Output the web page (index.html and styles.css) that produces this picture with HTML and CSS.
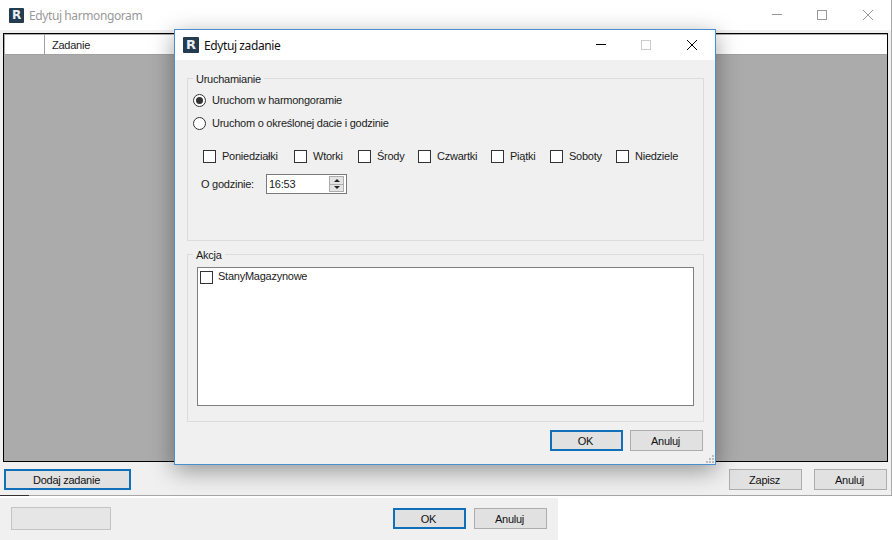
FILE: index.html
```html
<!DOCTYPE html>
<html lang="pl">
<head>
<meta charset="utf-8">
<title>Edytuj zadanie</title>
<link rel="stylesheet" href="styles.css">
</head>
<body>
<div class="desktop">
  <section class="win win-bottom">
    <div class="bottom-bar">
      <button class="btn btn-blank" type="button"></button>
      <button class="btn btn-default" type="button">OK</button>
      <button class="btn" type="button">Anuluj</button>
    </div>
  </section>

  <section class="win win-back">
    <header class="titlebar titlebar-back">
      <span class="logo logo-back">R</span>
      <span class="title title-muted">Edytuj harmongoram</span>
      <svg class="controls" width="102" height="12" viewBox="0 0 102 12" fill="none" stroke="#999">
        <path d="M0 5.5H10"/>
        <rect x="45.5" y="1.5" width="9" height="9"/>
        <path d="M91 1L101 11M101 1L91 11"/>
      </svg>
    </header>
    <div class="grid">
      <div class="grid-head">
        <div class="grid-corner"></div>
        <div class="grid-col">Zadanie</div>
      </div>
    </div>
    <footer class="back-foot">
      <button class="btn btn-default btn-add" type="button">Dodaj zadanie</button>
      <button class="btn btn-save" type="button">Zapisz</button>
      <button class="btn" type="button">Anuluj</button>
    </footer>
  </section>

  <section class="win win-dialog">
    <header class="titlebar titlebar-dialog">
      <span class="logo">R</span>
      <span class="title">Edytuj zadanie</span>
      <svg class="controls" width="102" height="12" viewBox="0 0 102 12" fill="none" stroke="#000">
        <path d="M0 5.5H10"/>
        <rect x="45.5" y="1.5" width="9" height="9" stroke="#ccc"/>
        <path d="M91 1L101 11M101 1L91 11"/>
      </svg>
    </header>
    <div class="dialog-body">
      <fieldset class="group group-run">
        <legend>Uruchamianie</legend>
        <label class="radio-row"><span class="radio radio-on"></span>Uruchom w harmongoramie</label>
        <label class="radio-row radio-row-2"><span class="radio"></span>Uruchom o określonej dacie i godzinie</label>
        <div class="days">
          <label class="day"><span class="check"></span>Poniedziałki</label>
          <label class="day"><span class="check"></span>Wtorki</label>
          <label class="day"><span class="check"></span>Środy</label>
          <label class="day"><span class="check"></span>Czwartki</label>
          <label class="day"><span class="check"></span>Piątki</label>
          <label class="day"><span class="check"></span>Soboty</label>
          <label class="day"><span class="check"></span>Niedziele</label>
        </div>
        <div class="time-row">
          <span class="time-label">O godzinie:</span>
          <div class="spin">
            <span class="spin-value">16:53</span>
            <span class="spin-btns">
              <span class="spin-btn"><i class="arrow-up"></i></span>
              <span class="spin-btn"><i class="arrow-down"></i></span>
            </span>
          </div>
        </div>
      </fieldset>
      <fieldset class="group group-action">
        <legend>Akcja</legend>
        <div class="list">
          <label class="list-item"><span class="check"></span><span class="list-text">StanyMagazynowe</span></label>
        </div>
      </fieldset>
      <div class="dialog-foot">
        <button class="btn btn-default" type="button">OK</button>
        <button class="btn" type="button">Anuluj</button>
      </div>
    </div>
    <svg class="grip" width="10" height="10" viewBox="0 0 10 10" fill="#bbb">
      <rect x="7" y="1" width="2" height="2"/>
      <rect x="4" y="4" width="2" height="2"/><rect x="7" y="4" width="2" height="2"/>
      <rect x="1" y="7" width="2" height="2"/><rect x="4" y="7" width="2" height="2"/><rect x="7" y="7" width="2" height="2"/>
    </svg>
  </section>
</div>
</body>
</html>
```
FILE: styles.css
```css
* { box-sizing: border-box; }
html, body { margin: 0; padding: 0; }
body {
  width: 892px;
  height: 540px;
  overflow: hidden;
  background: #fff;
  font-family: "Liberation Sans", Arial, sans-serif;
  font-size: 11px;
  letter-spacing: -0.25px;
  color: #1c1c1c;
}
.desktop { position: relative; width: 892px; height: 540px; overflow: hidden; }
.win { position: absolute; background: #f0f0f0; }

.win-bottom { left: 0; top: 496px; width: 558px; height: 44px; border-top: 2px solid #fff; }
.bottom-bar { display: flex; align-items: center; padding: 9px 10px 0 11px; }
.win-bottom .btn-default { margin-right: 8px; }

.win-back { left: 0; top: 0; width: 892px; height: 496px; border-right: 1px solid #aaa; border-bottom: 1px solid #a6a6a6; }
.win-back::after { content: ""; position: absolute; left: 0; bottom: -1px; width: 29px; height: 1px; background: #333; }
.titlebar { display: flex; align-items: center; background: #fff; }
.titlebar-back { height: 30px; padding-left: 9px; }
.logo {
  flex: none;
  width: 16px;
  height: 16px;
  background: #243c50;
  border-radius: 1px;
  color: #e8eef2;
  font: 700 13px/16px "DejaVu Sans", sans-serif;
  letter-spacing: 0;
  text-align: center;
}
.logo-back { width: 15px; height: 15px; line-height: 15px; font-size: 12px; }
.title { margin-left: 5px; font-family: "Noto Sans", sans-serif; font-size: 12px; letter-spacing: -0.4px; color: #111; }
.title-muted { color: #999; }
.controls { margin: 0 17px 0 auto; flex: none; }

.grid { height: 429px; margin: 3px 3px 0 3px; border: 1px solid #000; background: #ababab; padding: 1px 0 0 1px; }
.grid-head { display: flex; height: 20px; background: #fff; border-bottom: 1px solid #a0a0a0; }
.grid-corner { width: 40px; border-right: 1px solid #a0a0a0; }
.grid-col { padding: 4px 0 0 7px; }

.back-foot { display: flex; padding: 7px 4px 0 4px; }
.btn-save { margin-right: 12px; }

.btn {
  display: block;
  width: 73px;
  height: 21px;
  padding: 0 2px 0 0;
  border: 1px solid #adadad;
  background: #e1e1e1;
  color: #111;
  font: inherit;
  letter-spacing: inherit;
  text-align: center;
}
.btn-default { border: 2px solid #0f6fb8; }
.btn-add { width: 127px; margin-right: auto; }
.btn-blank { width: 100px; height: 23px; margin-right: 282px; background: #e6e6e6; border-color: #c4c4c4; }

.win-dialog {
  left: 174px;
  top: 29px;
  width: 542px;
  height: 436px;
  border: 1px solid #4a8fd0;
  box-shadow: 0 6px 22px rgba(0, 0, 0, .38);
}
.titlebar-dialog { height: 30px; padding-left: 8px; }

.dialog-body { padding: 10px 11px 0 12px; }
.group { margin: 0; padding: 0; border: 1px solid #dcdcdc; display: block; min-width: 0; }
.group legend { margin-left: 5px; padding: 2px 3px 0; line-height: 14px; }
.group-run { height: 171px; }
.group-action { height: 176px; margin-top: 5px; }

.radio-row { display: flex; align-items: center; height: 14px; margin: 7px 0 0 5px; }
.radio-row-2 { margin-top: 9px; }
.radio {
  flex: none;
  position: relative;
  width: 13px;
  height: 13px;
  margin-right: 6px;
  border: 1px solid #333;
  border-radius: 50%;
  background: #fff;
}
.radio-on::after {
  content: "";
  position: absolute;
  left: 2px;
  top: 2px;
  width: 7px;
  height: 7px;
  border-radius: 50%;
  background: #333;
}

.days {
  display: grid;
  grid-template-columns: 91px 64px 60px 73px 59px 66px auto;
  margin: 19px 0 0 15px;
}
.day { display: flex; align-items: center; height: 14px; }
.check { flex: none; width: 13px; height: 13px; margin-right: 6px; border: 1px solid #333; background: #fff; }

.time-row { display: flex; align-items: center; margin: 11px 0 0 13px; }
.time-label { width: 65px; }
.spin { display: flex; align-items: center; width: 81px; height: 20px; padding: 0 1px 0 2px; border: 1px solid #7a7a7a; background: #fff; }
.spin-value { flex: 1; }
.spin-btns { display: flex; flex-direction: column; width: 15px; height: 16px; margin-right: 1px; border: 1px solid #adadad; }
.spin-btn { flex: 1; display: flex; align-items: center; justify-content: center; background: #e4e4e4; }
.spin-btn + .spin-btn { border-top: 1px solid #adadad; }
.arrow-up, .arrow-down { width: 0; height: 0; border-left: 3px solid transparent; border-right: 3px solid transparent; }
.arrow-up { border-bottom: 3px solid #222; }
.arrow-down { border-top: 3px solid #222; }

.list { height: 139px; margin: 5px 9px 0 9px; border: 1px solid #7f7f7f; background: #fff; padding: 2px; }
.list-item { display: flex; align-items: center; height: 14px; }
.list-item .check { margin-right: 5px; }
.list-text { padding-bottom: 2px; }

.dialog-foot { display: flex; justify-content: flex-end; gap: 7px; margin: 8px 1px 0 0; }
.grip { position: absolute; right: 0; bottom: 0; }
```
